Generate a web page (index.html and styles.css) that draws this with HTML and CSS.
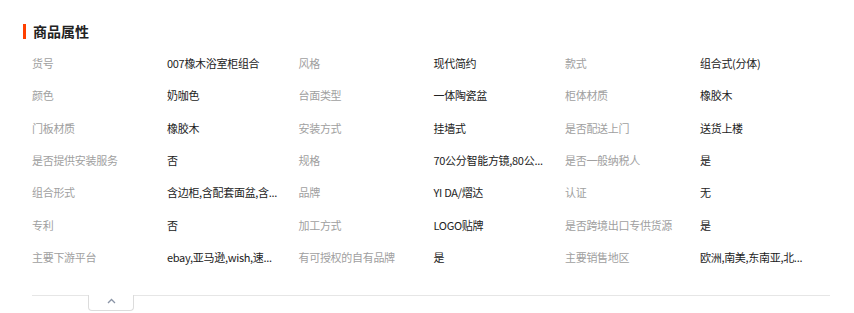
FILE: index.html
```html
<!DOCTYPE html>
<html lang="zh">
<head>
<meta charset="utf-8">
<link rel="stylesheet" href="styles.css">
</head>
<body>
<section class="attrs">
  <h2 class="title">商品属性</h2>
  <div class="grid">
    <div class="cell"><span class="k">货号</span><span class="v">007橡木浴室柜组合</span></div>
    <div class="cell"><span class="k">风格</span><span class="v">现代简约</span></div>
    <div class="cell"><span class="k">款式</span><span class="v">组合式(分体)</span></div>
    <div class="cell"><span class="k">颜色</span><span class="v">奶咖色</span></div>
    <div class="cell"><span class="k">台面类型</span><span class="v">一体陶瓷盆</span></div>
    <div class="cell"><span class="k">柜体材质</span><span class="v">橡胶木</span></div>
    <div class="cell"><span class="k">门板材质</span><span class="v">橡胶木</span></div>
    <div class="cell"><span class="k">安装方式</span><span class="v">挂墙式</span></div>
    <div class="cell"><span class="k">是否配送上门</span><span class="v">送货上楼</span></div>
    <div class="cell"><span class="k">是否提供安装服务</span><span class="v">否</span></div>
    <div class="cell"><span class="k">规格</span><span class="v">70公分智能方镜,80公...</span></div>
    <div class="cell"><span class="k">是否一般纳税人</span><span class="v">是</span></div>
    <div class="cell"><span class="k">组合形式</span><span class="v">含边柜,含配套面盆,含...</span></div>
    <div class="cell"><span class="k">品牌</span><span class="v">YI DA/熠达</span></div>
    <div class="cell"><span class="k">认证</span><span class="v">无</span></div>
    <div class="cell"><span class="k">专利</span><span class="v">否</span></div>
    <div class="cell"><span class="k">加工方式</span><span class="v">LOGO贴牌</span></div>
    <div class="cell"><span class="k">是否跨境出口专供货源</span><span class="v">是</span></div>
    <div class="cell"><span class="k">主要下游平台</span><span class="v">ebay,亚马逊,wish,速...</span></div>
    <div class="cell"><span class="k">有可授权的自有品牌</span><span class="v">是</span></div>
    <div class="cell"><span class="k">主要销售地区</span><span class="v">欧洲,南美,东南亚,北...</span></div>
  </div>
  <div class="foot">
    <button class="fold" type="button" aria-label="收起">
      <svg width="9" height="6" viewBox="0 0 9 6"><path d="M1 5 L4.5 1.5 L8 5" fill="none" stroke="#8a94a6" stroke-width="1.3"/></svg>
    </button>
  </div>
</section>
</body>
</html>
```
FILE: styles.css
```css
* { box-sizing: border-box; }
html, body { margin: 0; padding: 0; background: #fff; }
body {
  font-family: "Noto Sans CJK SC", "Noto Sans", sans-serif;
  font-size: 11px;
  letter-spacing: -0.3px;
  color: #333;
}
.attrs {
  width: 854px;
  padding: 24px 24px 0 32px;
}
.title {
  margin: 0 0 8px -9px;
  padding-left: 7px;
  border-left: 3px solid #ff4000;
  font-size: 14px;
  font-weight: bold;
  letter-spacing: 0;
  line-height: 15px;
  color: #222;
}
.grid {
  display: grid;
  grid-template-columns: repeat(3, 266.5px);
  grid-auto-rows: 32.33px;
}
.cell {
  display: flex;
  align-items: center;
  white-space: nowrap;
}
.k {
  width: 135px;
  flex: none;
  color: #a0a0a0;
}
.v {
  color: #222;
}
.foot {
  margin-top: 22px;
  border-top: 1px solid #e6e6e6;
  width: 798px;
  height: 17px;
}
.fold {
  display: flex;
  justify-content: center;
  align-items: flex-start;
  margin: -1px 0 0 56px;
  width: 46px;
  height: 16px;
  padding: 3px 0 0;
  background: #fff;
  border: 1px solid #dcdcdc;
  border-top: none;
  border-radius: 0 0 4px 4px;
}
```
